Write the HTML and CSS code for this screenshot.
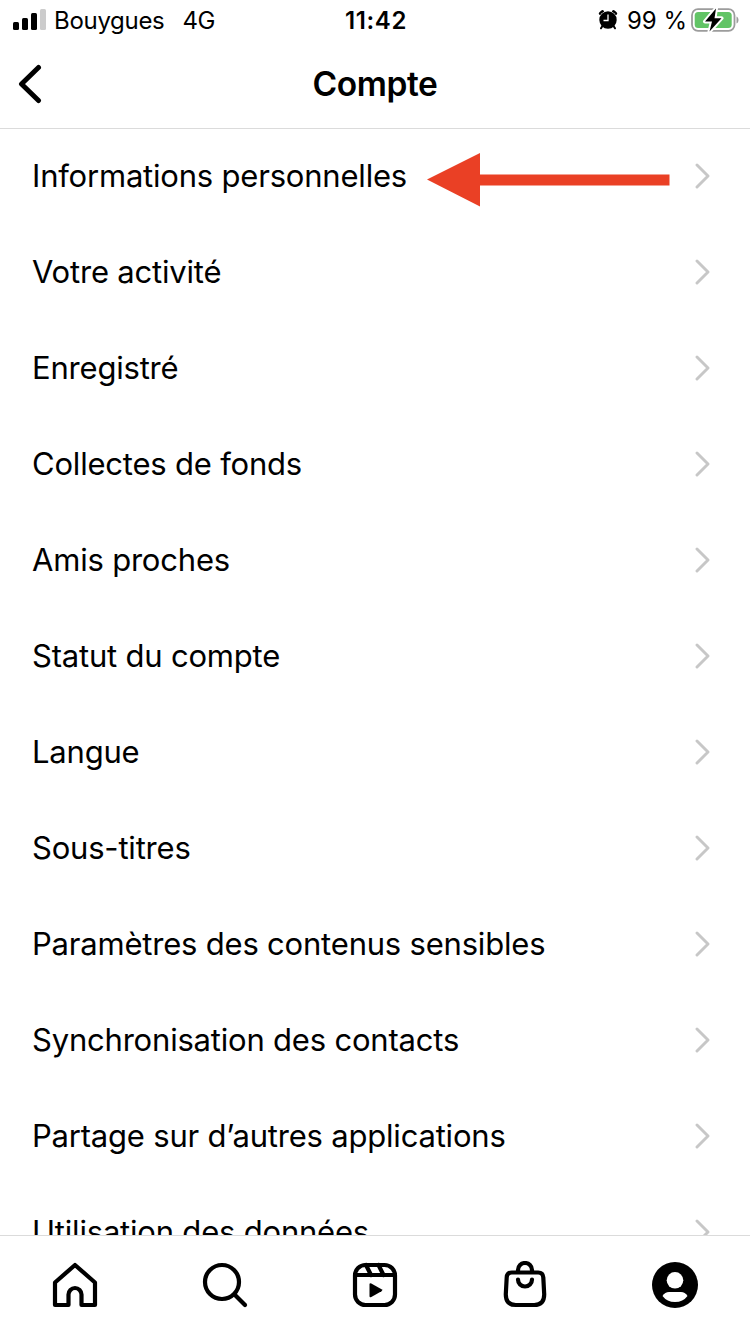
FILE: index.html
```html
<!DOCTYPE html>
<html lang="fr">
<head>
  <meta charset="UTF-8" />
  <meta name="viewport" content="width=device-width, initial-scale=1.0"/>
  <title>Compte</title>
  <link rel="stylesheet" href="styles.css">
</head>
<body>
  <div class="screen">
    <div class="status-bar">
      <div class="status-left">
        <svg class="signal" width="33" height="22" viewBox="0 0 33 22">
          <rect x="0" y="13" width="6" height="8" rx="1.5"/>
          <rect x="9" y="9" width="6" height="12" rx="1.5"/>
          <rect x="18" y="4" width="6" height="17" rx="1.5"/>
          <rect x="27" y="0" width="6" height="21" rx="1.5" fill="#cccccc"/>
        </svg>
        <span class="carrier">Bouygues</span>
        <span class="network">4G</span>
      </div>
      <div class="status-time">11:42</div>
      <div class="status-right">
        <svg class="alarm" width="20" height="22" viewBox="0 0 20 22">
          <path d="M2.500 4.500 4.500 2.800M17.500 4.500 15.500 2.800" stroke="#000" stroke-width="3.4" stroke-linecap="round"/>
          <circle cx="10" cy="11" r="9.300" fill="#fff"/>
          <path d="M4.500 17 3 19.300M15.500 17 17 19.300" stroke="#000" stroke-width="2" stroke-linecap="round"/>
          <circle cx="10" cy="11" r="8.700"/>
          <path d="M10 5.500v6H5.500" fill="none" stroke="#fff" stroke-width="1.300"/>
        </svg>
        <span class="percent">99 %</span>
        <svg class="battery" width="48" height="24" viewBox="0 0 48 24">
          <rect x="1" y="1.200" width="42.500" height="21.600" rx="6" fill="none" stroke="#9c9c9c" stroke-width="1.800"/>
          <path d="M45.500 8.500c2.700 1 2.700 6 0 7z" fill="#9c9c9c"/>
          <rect x="3.700" y="4" width="37" height="16" rx="3.500" fill="#62c466"/>
          <path d="M25 .5 14 13.500h7L18.500 23.500 30.500 10.200H23.500z" fill="#000" stroke="#fff" stroke-width="4" stroke-linejoin="round" paint-order="stroke"/>
        </svg>
      </div>
    </div>

    <header class="header">
      <svg class="back" width="24" height="40" viewBox="0 0 24 40">
        <path d="M20.500 3.500 3.500 20 20.500 36.500" fill="none" stroke="#000" stroke-width="5" stroke-linecap="round" stroke-linejoin="round"/>
      </svg>
      <h1>Compte</h1>
    </header>

    <svg width="0" height="0" class="defs">
      <symbol id="chevron" viewBox="0 0 16 28">
        <path d="M3 3 14 14 3 25" fill="none" stroke="#c7c7c7" stroke-width="2.900" stroke-linecap="round" stroke-linejoin="round"/>
      </symbol>
    </svg>

    <ul class="menu">
      <li>
        <span>Informations personnelles</span>
        <svg class="arrow" width="243" height="54" viewBox="0 0 243 54">
          <path d="M0 26.500 53 0v21.500h189.500v11H53V53.500z" fill="#ea4025"/>
        </svg>
        <svg class="chevron"><use href="#chevron"/></svg>
      </li>
      <li><span>Votre activité</span><svg class="chevron"><use href="#chevron"/></svg></li>
      <li><span>Enregistré</span><svg class="chevron"><use href="#chevron"/></svg></li>
      <li><span>Collectes de fonds</span><svg class="chevron"><use href="#chevron"/></svg></li>
      <li><span>Amis proches</span><svg class="chevron"><use href="#chevron"/></svg></li>
      <li><span>Statut du compte</span><svg class="chevron"><use href="#chevron"/></svg></li>
      <li><span>Langue</span><svg class="chevron"><use href="#chevron"/></svg></li>
      <li><span>Sous-titres</span><svg class="chevron"><use href="#chevron"/></svg></li>
      <li><span>Paramètres des contenus sensibles</span><svg class="chevron"><use href="#chevron"/></svg></li>
      <li><span>Synchronisation des contacts</span><svg class="chevron"><use href="#chevron"/></svg></li>
      <li><span>Partage sur d’autres applications</span><svg class="chevron"><use href="#chevron"/></svg></li>
      <li><span>Utilisation des données</span><svg class="chevron"><use href="#chevron"/></svg></li>
    </ul>

    <nav class="tab-bar">
      <svg width="48" height="48" viewBox="0 0 48 48">
        <path d="M4 21.500 24 4 44 21.500V44H30.500V33.500a6.500 6.500 0 0 0-13 0V44H4z" class="line"/>
      </svg>
      <svg width="48" height="48" viewBox="0 0 48 48">
        <circle cx="21" cy="21" r="17" class="line"/>
        <path d="M33.500 33.500 44 44" class="line"/>
      </svg>
      <svg width="48" height="48" viewBox="0 0 48 48">
        <rect x="4" y="4" width="40" height="40" rx="10.500" class="line"/>
        <path d="M4 14H44M15 4 20 14M27.500 4 32.500 14" class="line"/>
        <path d="M18.500 23.500v11.500q0 2 1.800 1L30.500 30.300q1.600-1 0-2L20.300 22.500q-1.800-1-1.800 1z"/>
      </svg>
      <svg width="48" height="48" viewBox="0 0 48 48">
        <path d="M10.800 11.500h26.400q4.800 0 5.100 5L43.200 33q.2 11-10 11H14.800q-10.200 0-10-11l.9-16.500q.3-5 5.100-5z" class="line"/>
        <path d="M17 11V9a7 7 0 0 1 14 0v2M17 18.500a7 7 0 0 0 14 0" class="line"/>
      </svg>
      <svg width="48" height="48" viewBox="0 0 48 48">
        <circle cx="24" cy="24" r="23"/>
        <circle cx="24" cy="19.300" r="8.300" fill="#fff"/>
        <path d="M11.500 35Q14 31 18 31H30Q34 31 36.500 35Q32 41 24 41T11.500 35z" fill="#fff"/>
      </svg>
    </nav>
  </div>
</body>
</html>
```

FILE: styles.css
```css
* {
  box-sizing: border-box;
}

body {
  margin: 0;
  font-family: 'Inter', 'Liberation Sans', sans-serif;
  background-color: #fff;
  color: #000;
}

svg {
  display: block;
  flex-shrink: 0;
}

.screen {
  display: flex;
  flex-direction: column;
  width: 750px;
  height: 1334px;
  overflow: hidden;
}

.status-bar {
  display: grid;
  grid-template-columns: 1fr auto 1fr;
  align-items: center;
  height: 40px;
  padding: 0 11px 0 13px;
  font-size: 24px;
  line-height: 38px;
}

.status-bar span,
.status-time {
  padding-top: 2px;
}

.status-left,
.status-right {
  display: flex;
  align-items: center;
}

.status-right {
  justify-content: flex-end;
}

.signal {
  margin-right: 8px;
}

.carrier {
  margin-right: 18px;
  letter-spacing: -0.3px;
}

.network {
  letter-spacing: -0.5px;
}

.status-time {
  font-weight: 600;
  letter-spacing: 0.6px;
}

.alarm {
  margin-right: 9px;
}

.percent {
  margin-right: 4px;
}

.header {
  display: grid;
  grid-template-columns: 100px 1fr 100px;
  align-items: center;
  height: 89px;
  border-bottom: 1px solid #dbdbdb;
}

.back {
  margin-left: 18px;
}

h1 {
  margin: 0;
  font-size: 33.5px;
  font-weight: 600;
  letter-spacing: -0.4px;
  text-align: center;
}

.defs {
  position: absolute;
}

.menu {
  flex: 1;
  min-height: 0;
  margin: 0;
  padding: 0;
  overflow: hidden;
  list-style: none;
}

.menu li {
  position: relative;
  display: flex;
  justify-content: space-between;
  align-items: center;
  height: 96px;
  padding: 0 40px 2px 32px;
  font-size: 31px;
  letter-spacing: -0.2px;
}

.menu span {
  padding-bottom: 2px;
}

.chevron {
  width: 16px;
  height: 28px;
}

/* pointer drawn over the first row */
.arrow {
  position: absolute;
  left: 427px;
  top: 24px;
}

.tab-bar {
  display: grid;
  grid-template-columns: repeat(5, 1fr);
  justify-items: center;
  height: 99px;
  padding-top: 25px;
  border-top: 1px solid #dbdbdb;
}

.line {
  fill: none;
  stroke: #000;
  stroke-width: 4.2;
  stroke-linecap: round;
  stroke-linejoin: round;
}
```
